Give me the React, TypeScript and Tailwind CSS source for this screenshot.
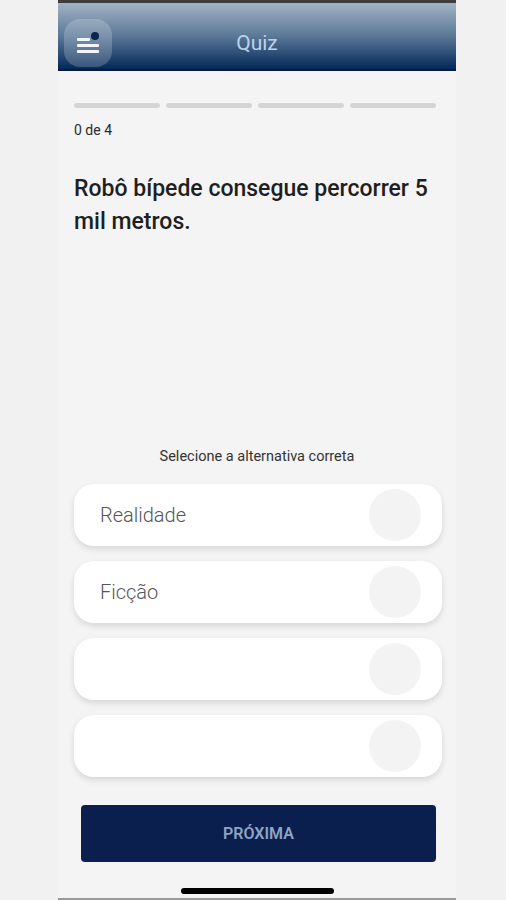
export default function App() {
    const options = ["Realidade", "Ficção", "", ""];

    return (
        <div className="min-h-[900px] w-full bg-[#f1f1f1]" style={{ fontFamily: "Roboto, 'Noto Sans', sans-serif" }}>
            <div className="ml-[58px] flex h-[900px] w-[398px] flex-col bg-[#f4f4f4]">
                {/* status strip */}
                <div className="h-[3px] bg-[#3d3d3d]" />

                {/* Header */}
                <div className="relative flex h-[68px] items-center justify-center border-b-2 border-[#0a1848] bg-gradient-to-b from-[#a3b3c5] via-[#5b7897] to-[#022a58] pt-[16px]">
                    <button className="absolute left-[6px] top-[16px] flex h-[48px] w-[48px] items-center justify-center rounded-2xl bg-white/20">
                        <svg width="24" height="22" viewBox="0 0 24 22">
                            <rect x="1" y="6" width="13" height="3" rx="1" fill="#f2f5fa" />
                            <rect x="1" y="12" width="22" height="3" rx="1" fill="#f2f5fa" />
                            <rect x="1" y="18" width="22" height="3" rx="1" fill="#f2f5fa" />
                            <circle cx="19" cy="4" r="4" fill="#0a2550" />
                        </svg>
                    </button>
                    <h1 className="text-[21px] text-[#bcd3ea]">Quiz</h1>
                </div>

                {/* Progress */}
                <div className="pl-4 pr-[20px] pt-[32px]">
                    <div className="grid grid-cols-4 gap-[6px]">
                        <div className="h-[5px] rounded-full bg-[#d5d5d5]" />
                        <div className="h-[5px] rounded-full bg-[#d5d5d5]" />
                        <div className="h-[5px] rounded-full bg-[#d5d5d5]" />
                        <div className="h-[5px] rounded-full bg-[#d5d5d5]" />
                    </div>
                    <p className="mt-[12px] text-[14px] text-[#2b2b2b]">0 de 4</p>
                    <p className="mt-[31px] text-[23px] font-medium leading-[33px] text-[#1f1f1f]">
                        Robô bípede consegue percorrer 5 mil metros.
                    </p>
                </div>

                {/* Alternatives */}
                <div className="mt-auto px-4">
                    <p className="text-center text-[14.5px] text-[#333]">Selecione a alternativa correta</p>
                    <div className="mt-[16px] flex flex-col gap-[15px]">
                        {options.map((opt, i) => (
                            <div key={i} className="flex h-[62px] w-[368px] items-center justify-between rounded-[20px] bg-white pl-[26px] pr-[21px] shadow-[0_3px_6px_rgba(0,0,0,0.12)]">
                                <span className="text-[20px] font-light text-[#555]">{opt}</span>
                                <div className="h-[52px] w-[52px] rounded-full bg-[#f3f3f3]" />
                            </div>
                        ))}
                    </div>
                </div>

                {/* Next button */}
                <div className="pl-[23px] pr-[20px] pt-[28px]">
                    <button className="flex h-[57px] w-full items-center justify-center rounded bg-[#0b1f4e] text-[16px] font-semibold text-[#8ea4c4]">
                        PRÓXIMA
                    </button>
                </div>

                {/* Home indicator */}
                <div className="flex justify-center pt-[26px] pb-[4px]">
                    <div className="h-[6px] w-[153px] rounded-full bg-black" />
                </div>
                <div className="h-[2px] bg-[#9a9a9a]" />
            </div>
        </div>
    );
}
